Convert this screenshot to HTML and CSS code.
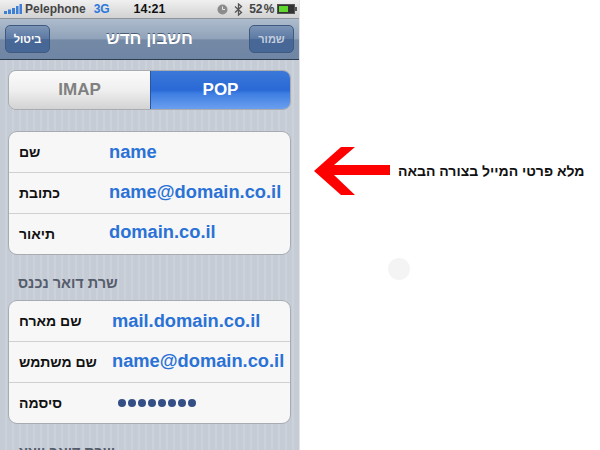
FILE: index.html
```html
<!DOCTYPE html>
<html lang="he">
<head>
<meta charset="utf-8">
<title>חשבון חדש</title>
<link rel="stylesheet" href="styles.css">
</head>
<body>
<main class="page">
  <section class="phone">
    <header class="status">
      <svg class="signal" width="18" height="11" viewBox="0 0 18 11"><rect x="0" y="7" width="3" height="3" /><rect x="4" y="5.5" width="3" height="4.5" /><rect x="8" y="4" width="3" height="6" /><rect x="12" y="2" width="2.5" height="8" /><rect x="15.5" y="0" width="2.5" height="10" /></svg>
      <span class="carrier">Pelephone</span>
      <span class="net">3G</span>
      <span class="clock">14:21</span>
      <svg class="lock" width="11" height="11" viewBox="0 0 11 11"><circle cx="5.5" cy="5.5" r="5" fill="#8c8c8c"/><path d="M5.5 2.5V5.5H8" stroke="#e8e8e8" fill="none"/></svg>
      <svg class="bt" width="9" height="13" viewBox="0 0 9 13"><path d="M1 3.5 7.5 9.5 4.5 12V1L7.5 3.5 1 9.5" stroke="#555" stroke-width="1.3" fill="none"/></svg>
      <span class="pct">52 %</span>
      <svg class="batt" width="20" height="10" viewBox="0 0 20 10"><rect x="0.5" y="0.5" width="17" height="9" fill="#333" stroke="#555"/><rect x="2" y="2" width="9" height="6" fill="#5fd72c"/><rect x="18" y="3" width="2" height="4" fill="#555"/></svg>
    </header>
    <nav class="navbar">
      <button class="navbtn navbtn-cancel">ביטול</button>
      <h1 class="navtitle">חשבון חדש</h1>
      <button class="navbtn navbtn-save">שמור</button>
    </nav>
    <div class="content">
      <div class="segment">
        <div class="seg seg-off">IMAP</div>
        <div class="seg seg-on">POP</div>
      </div>
      <div class="group group-first">
        <div class="row"><span class="label">שם</span><span class="value v1">name</span></div>
        <div class="row"><span class="label">כתובת</span><span class="value v1">name@domain.co.il</span></div>
        <div class="row"><span class="label">תיאור</span><span class="value v1">domain.co.il</span></div>
      </div>
      <h2 class="section">שרת דואר נכנס</h2>
      <div class="group">
        <div class="row"><span class="label">שם מארח</span><span class="value v2">mail.domain.co.il</span></div>
        <div class="row"><span class="label">שם משתמש</span><span class="value v2">name@domain.co.il</span></div>
        <div class="row"><span class="label">סיסמה</span><span class="dots"><i></i><i></i><i></i><i></i><i></i><i></i><i></i><i></i></span></div>
      </div>
      <h2 class="section section-cut">שרת דואר יוצא</h2>
    </div>
  </section>
  <aside class="side">
    <div class="note">
      <svg class="arrow" width="77" height="48" viewBox="0 0 77 48"><path d="M0 24 27 0H41L20 18H76V28H20L41 48H27Z" fill="#ff0000"/></svg>
      <p class="notetext">מלא פרטי המייל בצורה הבאה</p>
    </div>
    <div class="touch"></div>
  </aside>
</main>
</body>
</html>
```
FILE: styles.css
```css
* { box-sizing: border-box; }
html, body { margin: 0; padding: 0; background: #fff; }
body { font-family: "Liberation Sans", Arial, sans-serif; }
.page { display: flex; width: 600px; height: 450px; overflow: hidden; }

.phone { width: 300px; height: 450px; flex: none; overflow: hidden; border-right: 1px solid #e4e4e4; }

.status { height: 19px; display: flex; align-items: center; padding: 0 2px 0 4px; font-size: 12px;
  background: linear-gradient(#f0f0f0, #d2d2d2); border-bottom: 1px solid #8d959c; color: #333; }
.signal { fill: #3d7fd6; flex: none; }
.carrier { margin-left: 3px; font-size: 12px; font-weight: 700; color: #444; width: 69px; }
.net { color: #2a78de; font-weight: 700; font-size: 12px; width: 40px; }
.clock { font-weight: 700; color: #111; width: 84px; font-size: 12.5px; }
.lock { flex: none; margin-right: 6px; }
.bt { flex: none; margin-right: 6px; }
.pct { font-weight: 700; color: #444; font-size: 12px; width: 28px; white-space: nowrap; word-spacing: -2px; }
.batt { flex: none; }

.navbar { height: 41px; display: flex; align-items: center; justify-content: space-between; padding: 0 5px;
  background: linear-gradient(#aebccd 0, #90a2b9 50%, #7489a6 52%, #6f86a4 100%);
  border-bottom: 1px solid #2e3d50; }
.navbtn { width: 45px; height: 28px; padding: 0; font: 700 11px "Liberation Sans", Arial, sans-serif; color: #fff;
  border: 1px solid #3f5a80; border-radius: 5px; background: linear-gradient(#7b94b6 0, #5c79a3 50%, #476797 52%, #476797 100%); }
.navbtn-save { color: #c3cedd; }
.navtitle { margin: 0; font-size: 17px; font-weight: 700; color: #fff; text-shadow: 0 -1px 0 #4a5d76; direction: rtl; }

.content { height: 390px; padding: 10px 8px 0;
  background: repeating-linear-gradient(90deg, #c5ccd5 0, #c5ccd5 5px, #cbd2da 5px, #cbd2da 7px); }

.segment { display: flex; height: 40px; border-radius: 8px; overflow: hidden; border: 1px solid #a9acb0; }
.seg { display: flex; align-items: center; justify-content: center; font-size: 17px; font-weight: 700; }
.seg-off { width: 141px; flex: none; color: #808080; background: linear-gradient(#fbfbfb, #efefef 50%, #d3d3d3); }
.seg-on { flex: 1; color: #fff; border-left: 1px solid #2a56a0; background: linear-gradient(#3b78d8 0, #2a69d6 50%, #3f7fe2 60%, #6a9fee 100%); }

.group { background: #f7f7f7; border: 1px solid #a7acb2; border-radius: 9px; }
.group-first { margin-top: 21px; }
.row { height: 41px; display: flex; align-items: center; border-top: 1px solid #d0d0d2; padding: 0 7px 0 10px; }
.row:first-child { border-top: 0; height: 40px; }
.label { width: 82px; flex: none; font-size: 14px; font-weight: 700; color: #111; direction: rtl; text-align: left; }
.value { font-size: 18.3px; font-weight: 700; color: #2a72d6; white-space: nowrap; margin-top: -2px; }
.row:first-child .value { margin-top: 0; }
.row:last-child .value { margin-top: -4px; }
.v1 { margin-left: 8px; }
.v2 { margin-left: 11px; }
.section { margin: 20px 0 9px; padding-left: 10px; font-size: 14.5px; line-height: 16px; font-weight: 700; color: #555c6c; direction: rtl; text-align: left; }
.section-cut { margin-top: 20px; }
.dots { display: flex; gap: 2px; margin-left: 17px; }
.dots i { width: 8px; height: 8px; border-radius: 50%; background: #344f85; }

.side { flex: 1; position: relative; }
.note { display: flex; align-items: center; gap: 7px; padding: 147px 0 0 14px; }
.arrow { flex: none; }
.notetext { margin: 0; font-size: 14px; font-weight: 700; color: #111; direction: rtl; white-space: nowrap; }
.touch { position: absolute; left: 88px; top: 258px; width: 22px; height: 22px; border-radius: 50%; background: #f4f4f4; }
```
